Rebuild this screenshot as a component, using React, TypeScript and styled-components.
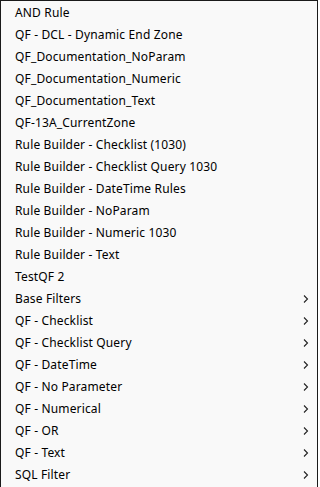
import styled, { createGlobalStyle } from 'styled-components';

const GlobalStyle = createGlobalStyle`
  html, body {
    margin: 0;
    padding: 0;
    background: #ffffff;
  }
`;

const Menu = styled.ul`
  list-style: none;
  margin: 0;
  padding: 1px 0;
  width: 318px;
  box-sizing: border-box;
  border: 1px solid #1a1a1a;
  background-color: #f9f9f9;
  font-family: 'Segoe UI', 'Noto Sans', 'Open Sans', sans-serif;
  font-size: 12px;
  letter-spacing: 0.15px;
  color: #000000;
`;

const Item = styled.li`
  display: flex;
  align-items: center;
  justify-content: space-between;
  height: 22px;
  padding: 0 8px 0 14px;
  cursor: default;
  white-space: nowrap;

  &:hover {
    background-color: #e5e5e5;
  }
`;

const Label = styled.span`
  line-height: 22px;
`;

const Chevron = styled.svg`
  width: 6px;
  height: 8px;
  flex: none;
`;

const leafItems = [
  'AND Rule',
  'QF - DCL - Dynamic End Zone',
  'QF_Documentation_NoParam',
  'QF_Documentation_Numeric',
  'QF_Documentation_Text',
  'QF-13A_CurrentZone',
  'Rule Builder - Checklist (1030)',
  'Rule Builder - Checklist Query 1030',
  'Rule Builder - DateTime Rules',
  'Rule Builder - NoParam',
  'Rule Builder - Numeric 1030',
  'Rule Builder - Text',
  'TestQF 2',
];

const subMenus = [
  'Base Filters',
  'QF - Checklist',
  'QF - Checklist Query',
  'QF - DateTime',
  'QF - No Parameter',
  'QF - Numerical',
  'QF - OR',
  'QF - Text',
  'SQL Filter',
];

export default function App() {
  return (
    <>
      <GlobalStyle />
      <Menu>
        {leafItems.map(name => (
          <Item key={name}>
            <Label>{name}</Label>
          </Item>
        ))}
        {subMenus.map(name => (
          <Item key={name}>
            <Label>{name}</Label>
            <Chevron viewBox="0 0 6 8">
              <path d="M1 0.5 L4.5 4 L1 7.5" fill="none" stroke="#222" strokeWidth="1.1" />
            </Chevron>
          </Item>
        ))}
      </Menu>
    </>
  );
}
